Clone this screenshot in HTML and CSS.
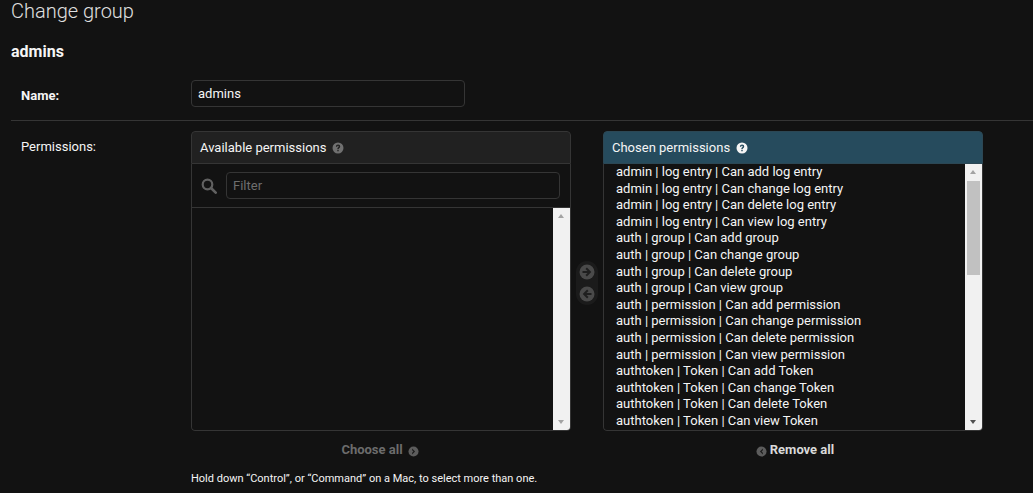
FILE: index.html
```html
<!DOCTYPE html>
<html lang="en">
<head>
<meta charset="utf-8">
<title>Change group</title>
<link rel="stylesheet" href="styles.css">
</head>
<body>
<svg class="defs" width="0" height="0" aria-hidden="true">
  <symbol id="help" viewBox="0 0 12 12"><circle cx="6" cy="6" r="5.500" fill="currentColor"/><path d="M3.900 4.700c0-1.300 1-2.100 2.200-2.100s2.100.8 2.100 1.800c0 1.500-1.500 1.500-1.500 2.700H5.300c0-1.900 1.400-1.800 1.400-2.600 0-.4-.3-.7-.7-.7-.5 0-.8.3-.8.9H3.900zM5.300 7.800h1.400v1.400H5.300z" fill="var(--glyph)"/></symbol>
  <symbol id="right" viewBox="0 0 16 16"><circle cx="8" cy="8" r="7.500" fill="currentColor"/><path d="M3.500 7h5L6.500 5l1.400-1.400L12.300 8l-4.400 4.400L6.500 11l2-2h-5z" fill="var(--glyph)"/></symbol>
  <symbol id="left" viewBox="0 0 16 16"><circle cx="8" cy="8" r="7.500" fill="currentColor"/><path d="M12.500 7h-5l2-2-1.400-1.400L3.700 8l4.400 4.400L9.500 11l-2-2h5z" fill="var(--glyph)"/></symbol>
  <symbol id="chev-r" viewBox="0 0 12 12"><circle cx="6" cy="6" r="5.500" fill="currentColor"/><path d="M4.500 2.800 7.700 6 4.500 9.200V7.400L5.900 6 4.500 4.600z" fill="var(--glyph)"/></symbol>
  <symbol id="chev-l" viewBox="0 0 12 12"><circle cx="6" cy="6" r="5.500" fill="currentColor"/><path d="M7.500 2.800 4.300 6l3.200 3.200V7.400L6.100 6l1.400-1.400z" fill="var(--glyph)"/></symbol>
</svg>
<main class="page">
  <h1 class="title">Change group</h1>
  <h2 class="object">admins</h2>
  <div class="row row-name">
    <label class="label label-strong" for="name">Name:</label>
    <input class="name-input" id="name" type="text" value="admins">
  </div>
  <div class="row row-perms">
    <div class="label">Permissions:</div>
    <div class="perm-field">
      <div class="selector">
        <section class="box">
          <header class="box-head">Available permissions <svg class="help help-dim"><use href="#help"/></svg></header>
          <div class="filter">
            <svg class="search" viewBox="0 0 16 16"><circle cx="6.500" cy="6.500" r="4.800" fill="none" stroke="currentColor" stroke-width="2.200"/><path d="m10 10 4.700 4.700" stroke="currentColor" stroke-width="2.600" stroke-linecap="round"/></svg>
            <input class="filter-input" type="text" placeholder="Filter">
          </div>
          <div class="list list-empty">
            <div class="items"></div>
            <div class="scrollbar">
              <span class="arrow arrow-up arrow-light"></span>
              <span class="track"></span>
              <span class="arrow arrow-down arrow-light"></span>
            </div>
          </div>
        </section>
        <div class="movers">
          <svg class="mover"><use href="#right"/></svg>
          <svg class="mover"><use href="#left"/></svg>
        </div>
        <section class="box">
          <header class="box-head box-head-chosen">Chosen permissions <svg class="help help-bright"><use href="#help"/></svg></header>
          <div class="list list-chosen">
            <div class="items">
              <div class="item">admin | log entry | Can add log entry</div>
              <div class="item">admin | log entry | Can change log entry</div>
              <div class="item">admin | log entry | Can delete log entry</div>
              <div class="item">admin | log entry | Can view log entry</div>
              <div class="item">auth | group | Can add group</div>
              <div class="item">auth | group | Can change group</div>
              <div class="item">auth | group | Can delete group</div>
              <div class="item">auth | group | Can view group</div>
              <div class="item">auth | permission | Can add permission</div>
              <div class="item">auth | permission | Can change permission</div>
              <div class="item">auth | permission | Can delete permission</div>
              <div class="item">auth | permission | Can view permission</div>
              <div class="item">authtoken | Token | Can add Token</div>
              <div class="item">authtoken | Token | Can change Token</div>
              <div class="item">authtoken | Token | Can delete Token</div>
              <div class="item">authtoken | Token | Can view Token</div>
            </div>
            <div class="scrollbar">
              <span class="arrow arrow-up arrow-light"></span>
              <span class="track"><span class="thumb"></span></span>
              <span class="arrow arrow-down"></span>
            </div>
          </div>
        </section>
        <div class="box-foot foot-off">Choose all <svg class="chev"><use href="#chev-r"/></svg></div>
        <div></div>
        <div class="box-foot foot-on"><svg class="chev"><use href="#chev-l"/></svg> Remove all</div>
      </div>
      <p class="help-text">Hold down “Control”, or “Command” on a Mac, to select more than one.</p>
    </div>
  </div>
</main>
</body>
</html>
```
FILE: styles.css
```css
* { box-sizing: border-box; }
html, body { margin: 0; height: 493px; overflow: hidden; }
body {
  background: #121212;
  color: #f5f5f5;
  font: 13px/16px Roboto, sans-serif;
}
.defs { display: block; }
.page { padding-left: 11px; }
.title {
  margin: 0;
  font-size: 20px;
  line-height: 22px;
  font-weight: 300;
  color: #e0e0e0;
}
.object {
  margin: 21px 0 0;
  font-size: 16px;
  line-height: 18px;
  font-weight: 700;
  color: #f5f5f5;
}
.row {
  display: grid;
  grid-template-columns: 170px 1fr;
  padding-left: 10px;
}
.row-name {
  align-items: center;
  margin-top: 19px;
  padding-bottom: 13px;
  border-bottom: 1px solid #353535;
}
.row-perms { padding-top: 10px; }
.label { color: #f5f5f5; }
.label-strong { font-weight: 700; padding-top: 5px; }
.row-perms .label { padding-top: 8px; }
.name-input {
  width: 274px;
  height: 27px;
  padding: 0 6px;
  background: #121212;
  border: 1px solid #353535;
  border-radius: 4px;
  color: #f5f5f5;
  font: 13px Roboto, sans-serif;
  outline: none;
}
.selector {
  display: grid;
  grid-template-columns: 380px 32px 380px;
}
.box {
  display: flex;
  flex-direction: column;
  height: 300px;
  border-radius: 4px;
  overflow: hidden;
}
.box-head {
  flex: none;
  display: flex;
  align-items: center;
  height: 33px;
  padding: 0 8px;
  gap: 6px;
  background: #212121;
  border: 1px solid #353535;
  border-radius: 4px 4px 0 0;
  color: #f5f5f5;
  font-size: 13px;
  font-weight: 400;
}
.box-head-chosen {
  background: #264b5d;
  border-color: #2c4754;
}
.help { width: 12px; height: 12px; }
.help-dim { color: #707070; --glyph: #212121; }
.help-bright { color: #f5f5f5; --glyph: #264b5d; }
.filter {
  flex: none;
  display: flex;
  align-items: center;
  gap: 9px;
  height: 44px;
  padding: 0 10px 1px 9px;
  border: 1px solid #353535;
  border-top: 0;
}
.search { width: 16px; height: 16px; flex: none; color: #606060; margin-top: 2px; }
.filter-input {
  flex: 1;
  min-width: 0;
  height: 27px;
  padding: 0 6px;
  background: #121212;
  border: 1px solid #353535;
  border-radius: 4px;
  color: #f5f5f5;
  font: 13px Roboto, sans-serif;
  outline: none;
}
.filter-input::placeholder { color: #6e6e6e; opacity: 1; }
.list {
  flex: 1;
  min-height: 0;
  display: flex;
  border: 1px solid #353535;
  border-top: 0;
  border-radius: 0 0 4px 4px;
  overflow: hidden;
}
.items {
  flex: 1;
  min-width: 0;
  padding-left: 12px;
  overflow: hidden;
}
.item {
  height: 16.6px;
  line-height: 16.6px;
  white-space: nowrap;
  color: #f5f5f5;
}
.scrollbar {
  flex: none;
  width: 17px;
  display: flex;
  flex-direction: column;
  background: #f1f1f1;
}
.track { flex: 1; display: block; padding: 0 2px; }
.thumb { display: block; width: 13px; height: 94px; background: #c1c1c1; }
.arrow {
  flex: none;
  position: relative;
  display: block;
  height: 17px;
}
.arrow::after {
  content: "";
  position: absolute;
  left: 5px;
  width: 0;
  height: 0;
  border-left: 3.5px solid transparent;
  border-right: 3.5px solid transparent;
}
.arrow-up::after { top: 6px; border-bottom: 4px solid #505050; }
.arrow-down::after { top: 7px; border-top: 4px solid #505050; }
.arrow-light.arrow-up::after { border-bottom-color: #a3a3a3; }
.arrow-light.arrow-down::after { border-top-color: #a3a3a3; }
.movers {
  align-self: center;
  justify-self: center;
  display: flex;
  flex-direction: column;
  align-items: center;
  gap: 6px;
  width: 22px;
  padding: 3px 0;
  margin-top: 4px;
  background: #1b1b1b;
  border-radius: 11px;
}
.mover { width: 16px; height: 16px; color: #4a4a4a; --glyph: #1f1f1f; }
.box-foot {
  display: flex;
  align-items: center;
  justify-content: center;
  height: 38px;
  font-weight: 700;
  font-size: 13px;
}
.foot-off { gap: 5px; padding-right: 2px; color: #6c6c6c; }
.foot-on { gap: 3px; padding-left: 4px; color: #d9d9d9; }
.chev { width: 11px; height: 11px; margin-top: 2px; color: #5c5c5c; --glyph: #1c1c1c; }
.help-text {
  margin: 2px 0 0;
  font-size: 11px;
  line-height: 16px;
  color: #f5f5f5;
}
```
